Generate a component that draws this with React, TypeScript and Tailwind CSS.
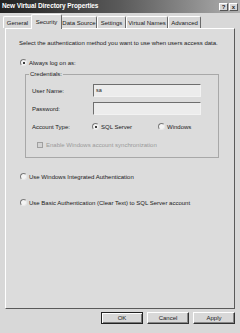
import React from "react";

const font = "font-['Liberation_Sans',Arial,sans-serif]";

const Radio = ({ checked }: { checked?: boolean }) => (
  <span className="relative inline-block w-[7px] h-[7px] rounded-full bg-[#f4f4f4] border border-[#7a7a7a] border-r-[#e8e8e8] border-b-[#e8e8e8] shrink-0">
    {checked && <span className="absolute left-[1.5px] top-[1.5px] w-[2px] h-[2px] rounded-full bg-black" />}
  </span>
);

const Tab = ({ label, w, active }: { label: string; w: string; active?: boolean }) => (
  <div
    className={`${w} whitespace-nowrap flex items-center justify-center border-t border-l border-r border-t-white border-l-white border-r-[#6a6a6a] rounded-t-[2px] ${
      active ? "h-[15px] -mx-[1px] bg-[#dcdcdc] relative z-10 -mb-[1px]" : "h-[12px] bg-[#d8d8d8]"
    }`}
  >
    {label}
  </div>
);

const Input = ({ value }: { value?: string }) => (
  <div className="w-[108px] h-[13px] bg-[#ececec] border border-t-[#6e6e6e] border-l-[#6e6e6e] border-r-[#f2f2f2] border-b-[#f2f2f2] px-[2px] flex items-center text-[5.5px] leading-none">
    {value}
  </div>
);

export default function App() {
  return (
    <div className={`w-[240px] h-[333px] bg-[#d8d8d8] ${font} text-[#1a1a1a] text-[6px] leading-none overflow-hidden flex flex-col`}>
      {/* title bar */}
      <div className="h-[13px] bg-gradient-to-r from-[#222] via-[#5a5a5a] to-[#b0b0b0] flex items-center px-[2px]">
        <span className="text-white font-bold text-[6.5px] tracking-[-0.1px]">New Virtual Directory Properties</span>
        <div className="ml-auto flex gap-[1px]">
          <span className="w-[9px] h-[8px] bg-[#d8d8d8] border border-t-white border-l-white border-r-[#555] border-b-[#555] text-[6px] font-bold flex items-center justify-center">?</span>
          <span className="w-[9px] h-[8px] bg-[#d8d8d8] border border-t-white border-l-white border-r-[#555] border-b-[#555] text-[6px] font-bold flex items-center justify-center">x</span>
        </div>
      </div>

      {/* tabs */}
      <div className="flex items-end pl-[3px] mt-[1px] h-[14px]">
        <Tab label="General" w="w-[29px]" />
        <Tab label="Security" w="w-[31px]" active />
        <Tab label="Data Source" w="w-[36px]" />
        <Tab label="Settings" w="w-[29px]" />
        <Tab label="Virtual Names" w="w-[42px]" />
        <Tab label="Advanced" w="w-[33px]" />
      </div>

      {/* panel */}
      <div className="mx-[5px] w-[230px] h-[281px] bg-[#dcdcdc] border border-t-white border-l-white border-r-[#5a5a5a] border-b-[#5a5a5a] pl-[13px] pt-[11px]">
        <div>Select the authentication method you want to use when users access data.</div>

        <div className="flex items-center gap-[2px] mt-[13px] ml-[1px]">
          <Radio checked />
          <span>Always log on as:</span>
        </div>

        <div className="relative mt-[8px] ml-[6px] w-[194px] h-[84px] border border-[#a8a8a8] pl-[6px] pt-[9px]">
          <span className="absolute -top-[4px] left-[3px] bg-[#dcdcdc] px-[1px]">Credentials:</span>
          <div className="flex items-center">
            <span className="w-[61px]">User Name:</span>
            <Input value="sa" />
          </div>
          <div className="flex items-center mt-[5px]">
            <span className="w-[61px]">Password:</span>
            <Input />
          </div>
          <div className="flex items-center mt-[8px]">
            <span className="w-[60px]">Account Type:</span>
            <span className="flex items-center gap-[2px] w-[66px]">
              <Radio checked />
              SQL Server
            </span>
            <span className="flex items-center gap-[2px]">
              <Radio />
              Windows
            </span>
          </div>
          <div className="flex items-center gap-[3px] mt-[12px] ml-[5px] text-[#9a9a9a]">
            <span className="w-[6px] h-[6px] border border-[#a0a0a0] bg-[#d4d4d4]" />
            Enable Windows account synchronization
          </div>
        </div>

        <div className="flex items-center gap-[2px] mt-[15px] ml-[1px]">
          <Radio />
          <span>Use Windows Integrated Authentication</span>
        </div>
        <div className="flex items-center gap-[2px] mt-[19px] ml-[1px]">
          <Radio />
          <span>Use Basic Authentication (Clear Text) to SQL Server account</span>
        </div>
      </div>

      {/* buttons */}
      <div className="flex justify-end gap-[4px] pr-[5px] mt-[3px]">
        <button className="w-[42px] h-[12px] bg-[#d8d8d8] border border-[#222] shadow-[inset_1px_1px_0_#fff,inset_-1px_-1px_0_#777] flex items-center justify-center">OK</button>
        <button className="w-[42px] h-[12px] bg-[#d8d8d8] border border-t-white border-l-white border-r-[#333] border-b-[#333] shadow-[inset_-1px_-1px_0_#888] flex items-center justify-center">Cancel</button>
        <button className="w-[42px] h-[12px] bg-[#d8d8d8] border border-t-white border-l-white border-r-[#333] border-b-[#333] shadow-[inset_-1px_-1px_0_#888] flex items-center justify-center">Apply</button>
      </div>
    </div>
  );
}
